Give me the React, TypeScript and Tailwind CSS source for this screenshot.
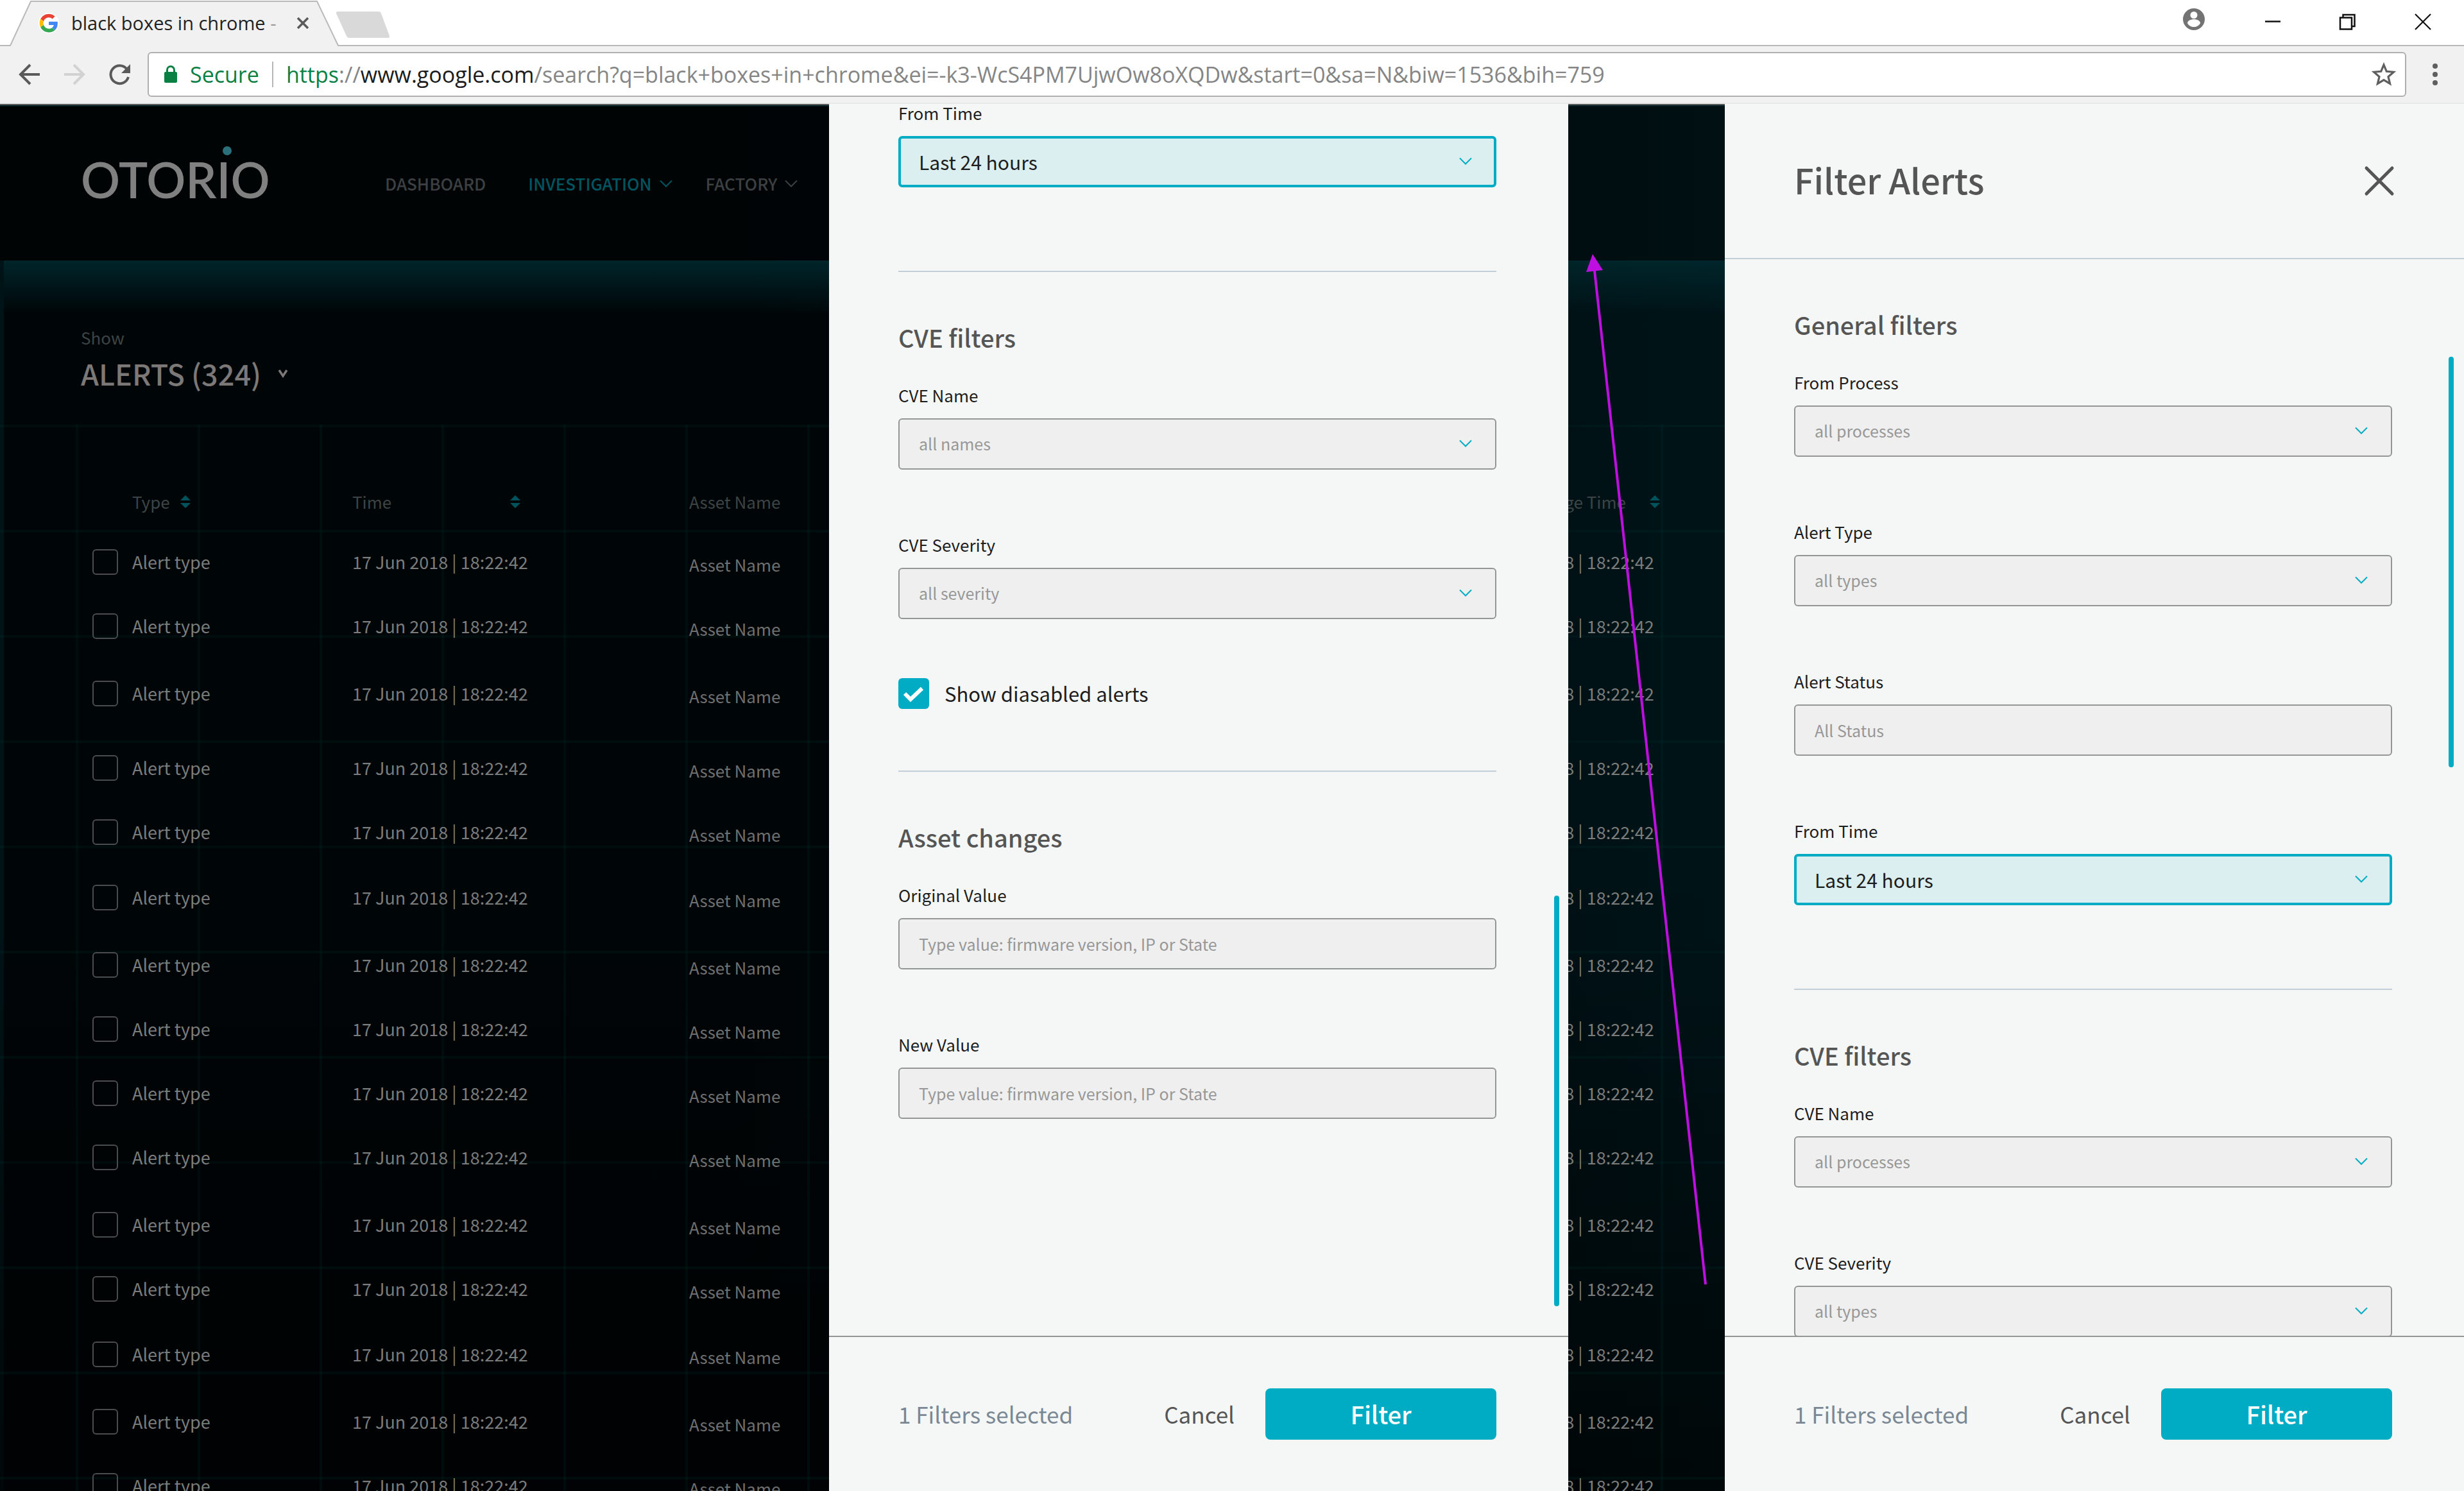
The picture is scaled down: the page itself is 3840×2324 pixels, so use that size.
import type { ReactNode } from "react";

const UI_FONT = "font-['Noto_Sans_CJK_SC','Noto_Sans',sans-serif]";
const CHROME_FONT = "font-['Open_Sans','Noto_Sans',sans-serif]";

function Chevron({ className }: { className: string }) {
  return (
    <svg viewBox="0 0 20 12" fill="none" stroke="currentColor" strokeWidth="2" className={className} aria-hidden="true">
      <path d="M1 1.5 10 10.5 19 1.5" />
    </svg>
  );
}

function SortIcon() {
  return (
    <svg viewBox="0 0 16 20" className="h-5 w-4 fill-[#00525d]" aria-hidden="true">
      <path d="M8 0 16 8H0Z M0 12H16L8 20Z" />
    </svg>
  );
}

/* ---------- Browser chrome ---------- */

function GoogleMark() {
  return (
    <svg viewBox="0 0 48 48" className="size-8 shrink-0" aria-hidden="true">
      <circle cx="24" cy="24" r="24" fill="#fff" />
      <g transform="translate(2.500 2.500) scale(.9)">
        <path fill="#EA4335" d="M24 9.5c3.54 0 6.71 1.22 9.21 3.6l6.85-6.85C35.9 2.38 30.47 0 24 0 14.62 0 6.51 5.38 2.56 13.22l7.98 6.19C12.43 13.72 17.74 9.5 24 9.5z" />
        <path fill="#4285F4" d="M46.98 24.55c0-1.57-.15-3.09-.38-4.55H24v9.02h12.94c-.58 2.96-2.26 5.48-4.78 7.18l7.73 6c4.51-4.18 7.09-10.36 7.09-17.65z" />
        <path fill="#FBBC05" d="M10.53 28.59c-.48-1.45-.76-2.99-.76-4.59s.27-3.14.76-4.59l-7.98-6.19C.92 16.46 0 20.12 0 24c0 3.88.92 7.54 2.56 10.78l7.97-6.19z" />
        <path fill="#34A853" d="M24 48c6.48 0 11.93-2.13 15.89-5.81l-7.73-6c-2.15 1.45-4.92 2.3-8.16 2.3-6.26 0-11.57-4.22-13.47-9.91l-7.98 6.19C6.51 42.62 14.62 48 24 48z" />
      </g>
    </svg>
  );
}

function TabStrip() {
  return (
    <div className="flex h-[72px] items-start justify-between border-b-2 border-[#b9b9b9] bg-white">
      <div className="flex items-start">
        <div className="relative ml-3 h-[72px] w-[518px]">
          <svg viewBox="0 0 518 72" className="absolute inset-0 h-full w-full" aria-hidden="true">
            <path d="M1 72 4 70 36 2H482L515 70 518 72Z" fill="#f1f1f1" />
            <path d="M1 71H4L36 2H482L515 71H518" fill="none" stroke="#b9b9b9" strokeWidth="2" />
          </svg>
          <div className="relative flex h-full items-center pl-12">
            <GoogleMark />
            <span className="ml-[19px] flex-1 whitespace-nowrap text-[29px] leading-10 text-[#222]">
              black boxes in chrome <span className="text-[#999]">-</span>
            </span>
            <button aria-label="Close tab" className="mr-12">
              <svg viewBox="0 0 20 20" className="size-5" stroke="#5a5a5a" strokeWidth="3.5" aria-hidden="true">
                <path d="M2 2 18 18M18 2 2 18" />
              </svg>
            </button>
          </div>
        </div>
        <button aria-label="New tab" className="-ml-2 mt-4">
          <svg viewBox="0 0 88 46" className="h-[46px] w-[88px]" aria-hidden="true">
            <path d="M5 2H68Q71 2 72 5L85 40Q86 43 82 43H22Q19 43 18 40L2 5Q1 2 5 2Z" fill="#d9d9d9" />
          </svg>
        </button>
      </div>
      <div className="flex h-[68px] items-center pr-[51px]">
        <button aria-label="Profile" className="mr-[92px] mb-2">
          <svg viewBox="0 0 36 36" className="size-9" aria-hidden="true">
            <circle cx="18" cy="18" r="17" fill="#737373" />
            <circle cx="18" cy="11.500" r="5.500" fill="#fff" />
            <path d="M8 24c0-4 6-6 10-6s10 2 10 6c-2 4-6 6-10 6s-8-2-10-6Z" fill="#fff" />
          </svg>
        </button>
        <button aria-label="Minimize" className="mr-[90px]">
          <svg viewBox="0 0 26 26" className="size-[26px]" stroke="#111" strokeWidth="2.500" aria-hidden="true">
            <path d="M1 12.500H25" />
          </svg>
        </button>
        <button aria-label="Restore" className="mr-[92px]">
          <svg viewBox="0 0 26 26" className="size-[26px]" fill="none" stroke="#111" strokeWidth="2.500" aria-hidden="true">
            <path d="M2 6.500H20V24.500H2ZM6.500 6.500V2H24.500V20H20" />
          </svg>
        </button>
        <button aria-label="Close window">
          <svg viewBox="0 0 26 26" className="size-[26px]" stroke="#111" strokeWidth="2.200" aria-hidden="true">
            <path d="M1 1 25 25M25 1 1 25" />
          </svg>
        </button>
      </div>
    </div>
  );
}

function Toolbar() {
  return (
    <div className="flex h-[90px] items-center border-b-2 border-[#e8e8e8] bg-[#f1f1f1] pl-7">
      <button aria-label="Back">
        <svg viewBox="0 0 36 36" className="size-9" fill="none" stroke="#5a5a5a" strokeWidth="4" aria-hidden="true">
          <path d="M34 18H5M19 3 4 18 19 33" />
        </svg>
      </button>
      <button aria-label="Forward" className="ml-[34px]">
        <svg viewBox="0 0 36 36" className="size-9" fill="none" stroke="#d2d2d2" strokeWidth="4" aria-hidden="true">
          <path d="M2 18H31M17 3 32 18 17 33" />
        </svg>
      </button>
      <button aria-label="Reload" className="ml-[34px]">
        <svg viewBox="0 0 36 36" className="size-9" aria-hidden="true">
          <path d="M29.500 9.500A14 14 0 1 0 32 22" fill="none" stroke="#5a5a5a" strokeWidth="4" />
          <path d="M35 2V16H21Z" fill="#5a5a5a" />
        </svg>
      </button>
      <div className="ml-[26px] flex h-[70px] flex-1 items-center rounded-md border-2 border-[#b0b0b0] bg-white pl-6 text-[34px]">
        <svg viewBox="0 0 20 28" className="h-7 w-5" aria-hidden="true">
          <rect x="0" y="10" width="20" height="17" rx="2" fill="#0b8043" />
          <path d="M4.500 11V7a5.500 5.500 0 0 1 11 0V11" fill="none" stroke="#0b8043" strokeWidth="3" />
        </svg>
        <span className="ml-5 text-[#0b8043]">Secure</span>
        <span className="ml-5 h-10 w-[2px] bg-[#b5b5b5]" />
        <div role="textbox" aria-label="Address" contentEditable suppressContentEditableWarning className="ml-5 flex-1 whitespace-nowrap text-[#858585]">
          <span className="text-[#0b8043]">https</span>://<span className="text-[#1c1c1c]">www.google.com</span>
          /search?q=black+boxes+in+chrome&amp;ei=-k3-WcS4PM7UjwOw8oXQDw&amp;start=0&amp;sa=N&amp;biw=1536&amp;bih=759
        </div>
        <button aria-label="Bookmark this page" className="mr-[14px]">
          <svg viewBox="0 0 38 38" className="size-[38px]" fill="none" stroke="#5f5f5f" strokeWidth="3.200" aria-hidden="true">
            <path d="M19 4 23.300 14.300 34.500 15.200 26 22.500 28.600 33.400 19 27.600 9.400 33.400 12 22.500 3.500 15.200 14.700 14.300Z" />
          </svg>
        </button>
      </div>
      <button aria-label="Browser menu" className="mx-10">
        <svg viewBox="0 0 10 36" className="h-9 w-[10px] fill-[#5f5f5f]" aria-hidden="true">
          <circle cx="5" cy="5" r="4" />
          <circle cx="5" cy="18" r="4" />
          <circle cx="5" cy="31" r="4" />
        </svg>
      </button>
    </div>
  );
}

/* ---------- Alerts page ---------- */

const ROW_HEIGHTS = [
  "h-[100px]", "h-[105px]", "h-[116px]", "h-[100px]", "h-[102px]", "h-[105px]", "h-[100px]", "h-[100px]",
  "h-[100px]", "h-[105px]", "h-[100px]", "h-[102px]", "h-[105px]", "h-[100px]", "h-[100px]",
];

function AlertsTable() {
  return (
    <table className="w-full table-fixed border-collapse text-left text-[27px] leading-10 whitespace-nowrap text-[#7b7c7c]">
      <thead className="text-[26px] text-[#3d4446]">
        <tr className="h-[94px] align-top">
          <th className="w-[206px]" aria-label="Select" />
          <th className="w-[343px] p-0 font-normal">
            <button className="flex items-center gap-4">Type <SortIcon /></button>
          </th>
          <th className="w-[525px] p-0 font-normal">
            <button className="flex w-[262px] items-center justify-between">Time <SortIcon /></button>
          </th>
          <th className="w-[1230px] p-0 font-normal">Asset Name</th>
          <th className="p-0 font-normal">
            <button className="flex w-[283px] items-center justify-between">
              <span className="w-[230px] text-right">Change Time</span>
              <SortIcon />
            </button>
          </th>
        </tr>
      </thead>
      <tbody>
        {ROW_HEIGHTS.map((height, i) => (
          <tr key={i} className={`${height} align-top`}>
            <td className="p-0 pl-36">
              <input id={`alert-${i}`} type="checkbox" className="block size-10 appearance-none rounded-md border-2 border-[#4b4c4d]" />
            </td>
            <td className="p-0">
              <label htmlFor={`alert-${i}`}>Alert type</label>
            </td>
            <td className="p-0">17 Jun 2018 | 18:22:42</td>
            <td className="p-0 pt-1 text-[26px] text-[#6f7070]">Asset Name</td>
            <td className="p-0">17 Jun 2018 | 18:22:42</td>
          </tr>
        ))}
      </tbody>
    </table>
  );
}

function AlertsPage() {
  return (
    <div className="flex h-full flex-col overflow-hidden border-t-2 border-[#58595a] bg-linear-to-r from-[#000507] from-30% to-[#001418] to-70%">
      <header className="flex h-[242px] shrink-0 items-center border-t-2 border-[#001d21] bg-black/20 pl-[126px]">
        <a href="#home" className="relative mr-[176px] w-[298px] pb-3 font-['Lato',sans-serif] text-[76px] leading-none font-semibold text-[#808080]">
          OTORIO
          <span className="absolute -top-[14px] left-[221px] size-[14px] rounded-full bg-[#2b6f7a]" />
        </a>
        <nav className="flex items-center text-[26px] leading-10 font-medium text-[#3c4042]">
          <a href="#dashboard" className="mr-[66px]">DASHBOARD</a>
          <a href="#investigation" className="mr-[52px] flex items-center gap-3 text-[#005560]">
            INVESTIGATION <Chevron className="h-3 w-5" />
          </a>
          <a href="#factory" className="flex items-center gap-3">
            FACTORY <Chevron className="h-3 w-5" />
          </a>
        </nav>
      </header>
      <main className="flex-1 border-l-[6px] border-[#001418] bg-linear-to-b from-[#00252a] to-transparent to-[84px]">
        <div className="-ml-[6px] h-[256px] pt-[100px] pl-[126px]">
          <p className="text-[26px] leading-10 text-[#3d4446]">Show</p>
          <button className="mt-2 flex items-center gap-[26px] text-[45px] leading-[56px] font-medium text-[#7d7878]">
            ALERTS (324)
            <svg viewBox="0 0 16 14" className="h-[14px] w-4" fill="none" stroke="#7d7878" strokeWidth="3.500" aria-hidden="true">
              <path d="M2 2 8 11 14 2" />
            </svg>
          </button>
        </div>
        <div className="-ml-[6px] bg-[linear-gradient(to_right,#003c3726_4px,transparent_4px),linear-gradient(to_bottom,#003c3726_4px,transparent_4px),linear-gradient(to_bottom,transparent_40%,#000000b0)] bg-size-[190px_164px,190px_164px,100%_100%] bg-position-[118px_0px,118px_0px,0px_0px] pt-[100px]">
          <AlertsTable />
        </div>
      </main>
    </div>
  );
}

/* ---------- Filter panels ---------- */

const FIELD = "h-20 w-full appearance-none rounded-md px-8 text-left outline-none";
const FIELD_IDLE = "border-2 border-[#949696] bg-[#efefef] pl-[30px] text-[25px] text-[#979797] placeholder:text-[#979797]";
const FIELD_ACTIVE = "border-4 border-[#00acc4] bg-[#dbeef0] pl-7 text-[30px] text-[#1d1d1d]";

function Label({ id, children }: { id: string; children: ReactNode }) {
  return <label htmlFor={id} className="text-[26px] leading-10 text-[#1d1d1d]">{children}</label>;
}

function SelectField({ id, label, value, active = false }: { id: string; label: string; value: string; active?: boolean }) {
  return (
    <div className="flex flex-col gap-4">
      <Label id={id}>{label}</Label>
      <div className="relative">
        <select id={id} className={`${FIELD} ${active ? FIELD_ACTIVE : FIELD_IDLE}`}>
          <option>{value}</option>
        </select>
        <Chevron className="pointer-events-none absolute top-[33px] right-[38px] h-3 w-5 text-[#00acc4]" />
      </div>
    </div>
  );
}

function TextField({ id, label, placeholder }: { id: string; label: string; placeholder: string }) {
  return (
    <div className="flex flex-col gap-4">
      <Label id={id}>{label}</Label>
      <input id={id} type="text" placeholder={placeholder} className={`${FIELD} ${FIELD_IDLE}`} />
    </div>
  );
}

function Section({ title, children }: { title: string; children: ReactNode }) {
  return (
    <section>
      <h3 className="mb-[46px] text-[38px] leading-12 font-medium text-[#555]">{title}</h3>
      <div className="flex flex-col gap-[97px]">{children}</div>
    </section>
  );
}

function Divider({ className }: { className: string }) {
  return <hr className={`border-t-2 border-[#c2cfd8] ${className}`} />;
}

function PanelFooter() {
  return (
    <footer className="flex h-[242px] shrink-0 items-center border-t-2 border-[#939696] pr-28 pl-[108px]">
      <span className="flex-1 text-[35px] leading-12 text-[#7a8794]">1 Filters selected</span>
      <button className="mr-12 text-[35px] leading-12 text-[#555]">Cancel</button>
      <button className="h-20 w-[360px] rounded-lg bg-[#00acc4] text-[38px] leading-12 font-medium text-white">Filter</button>
    </footer>
  );
}

function ScrolledPanel() {
  return (
    <aside className="flex w-[30%] flex-col bg-[#f5f7f6]">
      <div className="relative flex-1 overflow-hidden pr-28 pl-[108px]">
        <div className="-mt-[6px]">
          <SelectField id="from-time-scrolled" label="From Time" value="Last 24 hours" active />
          <Divider className="mt-[130px] mb-[78px]" />
          <Section title="CVE filters">
            <SelectField id="cve-name-scrolled" label="CVE Name" value="all names" />
            <SelectField id="cve-severity-scrolled" label="CVE Severity" value="all severity" />
          </Section>
          <div className="relative mt-[92px] flex items-center gap-6">
            <input id="show-disabled" type="checkbox" defaultChecked className="size-12 appearance-none rounded-md bg-[#00acc4]" />
            <svg viewBox="0 0 48 48" className="pointer-events-none absolute left-0 size-12" fill="none" stroke="#fff" strokeWidth="6" aria-hidden="true">
              <path d="M10 24 19 33 37 16" />
            </svg>
            <label htmlFor="show-disabled" className="text-[31px] leading-12 text-[#1d1d1d]">Show diasabled alerts</label>
          </div>
          <Divider className="mt-24 mb-[78px]" />
          <Section title="Asset changes">
            <TextField id="original-value" label="Original Value" placeholder="Type value: firmware version, IP or State" />
            <TextField id="new-value" label="New Value" placeholder="Type value: firmware version, IP or State" />
          </Section>
        </div>
        <div className="absolute right-[14px] bottom-[46px] h-[640px] w-2 rounded-full bg-[#00acc4]" />
      </div>
      <PanelFooter />
    </aside>
  );
}

function TopPanel() {
  return (
    <aside className="flex w-[30%] flex-col bg-[#f5f7f6]">
      <header className="flex h-[242px] shrink-0 items-center justify-between border-b-2 border-[#c2cfd8] px-[108px]">
        <h2 className="pb-1 text-[54px] leading-16 font-medium text-[#555]">Filter Alerts</h2>
        <button aria-label="Close filters">
          <svg viewBox="0 0 48 48" className="size-12" stroke="#555" strokeWidth="5" strokeLinecap="round" aria-hidden="true">
            <path d="M4 4 44 44M44 4 4 44" />
          </svg>
        </button>
      </header>
      <div className="relative flex-1 overflow-hidden pt-[78px] pr-28 pl-[108px]">
        <Section title="General filters">
          <SelectField id="from-process" label="From Process" value="all processes" />
          <SelectField id="alert-type" label="Alert Type" value="all types" />
          <TextField id="alert-status" label="Alert Status" placeholder="All Status" />
          <SelectField id="from-time" label="From Time" value="Last 24 hours" active />
        </Section>
        <Divider className="mt-[130px] mb-[78px]" />
        <Section title="CVE filters">
          <SelectField id="cve-name" label="CVE Name" value="all processes" />
          <SelectField id="cve-severity" label="CVE Severity" value="all types" />
        </Section>
        <div className="absolute top-[152px] right-4 h-[640px] w-2 rounded-full bg-[#00acc4]" />
      </div>
      <PanelFooter />
    </aside>
  );
}

function FlowArrow() {
  return (
    <svg viewBox="0 0 244 2162" preserveAspectRatio="xMidYMin slice" className="pointer-events-none h-full w-[244px] shrink-0" aria-hidden="true">
      <path d="M41 260 214 1840" stroke="#bd10e0" strokeWidth="4" />
      <path d="M38 234 28 262 54 259Z" fill="#bd10e0" />
    </svg>
  );
}

export default function App() {
  return (
    <div className="flex h-screen flex-col overflow-hidden">
      <div className={CHROME_FONT}>
        <TabStrip />
        <Toolbar />
      </div>
      <div className={`relative min-h-0 flex-1 bg-black ${UI_FONT}`}>
        <AlertsPage />
        <div className="absolute inset-0 flex justify-end">
          <ScrolledPanel />
          <FlowArrow />
          <TopPanel />
        </div>
      </div>
    </div>
  );
}
